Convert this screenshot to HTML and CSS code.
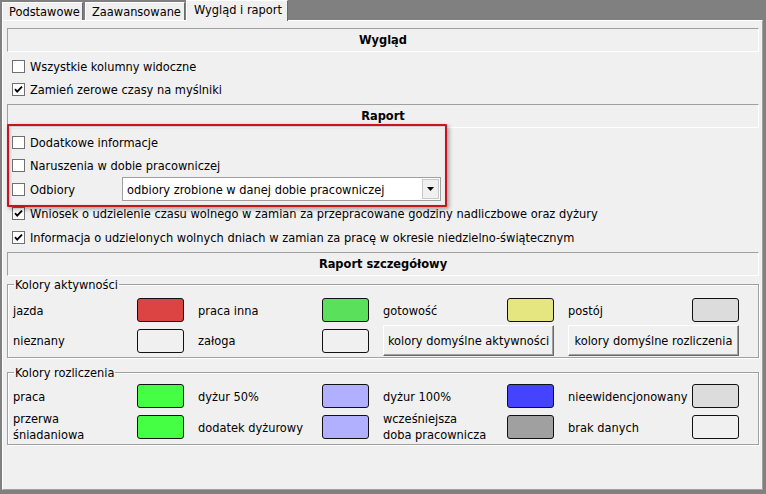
FILE: index.html
```html
<!DOCTYPE html>
<html lang="pl">
<head>
<meta charset="utf-8">
<title>Wygląd i raport</title>
<link rel="stylesheet" href="styles.css">
</head>
<body>
<div class="tabs">
  <div class="tab t1">Podstawowe</div>
  <div class="tab t2">Zaawansowane</div>
  <div class="tab active">Wygląd i raport</div>
</div>
<div class="panel">
  <div class="section-head">Wygląd</div>
  <div class="check-row first"><span class="cb"></span><span>Wszystkie kolumny widoczne</span></div>
  <div class="check-row tight"><span class="cb"><svg width="11" height="11" viewBox="0 0 11 11"><path d="M2 5.2 L4.2 7.6 L9 2.6" fill="none" stroke="#000" stroke-width="1.8"/></svg></span><span>Zamień zerowe czasy na myślniki</span></div>

  <div class="section-head spaced">Raport</div>
  <div class="check-row first"><span class="cb"></span><span>Dodatkowe informacje</span></div>
  <div class="check-row tight"><span class="cb"></span><span>Naruszenia w dobie pracowniczej</span></div>
  <div class="check-row"><span class="cb"></span><span class="odb-label">Odbiory</span>
    <div class="select"><span class="select-text">odbiory zrobione w danej dobie pracowniczej</span><span class="select-btn"><svg width="7" height="4" viewBox="0 0 7 4"><path d="M0 0 H7 L3.5 4 Z" fill="#000"/></svg></span></div>
  </div>
  <div class="check-row"><span class="cb"><svg width="11" height="11" viewBox="0 0 11 11"><path d="M2 5.2 L4.2 7.6 L9 2.6" fill="none" stroke="#000" stroke-width="1.8"/></svg></span><span>Wniosek o udzielenie czasu wolnego w zamian za przepracowane godziny nadliczbowe oraz dyżury</span></div>
  <div class="check-row"><span class="cb"><svg width="11" height="11" viewBox="0 0 11 11"><path d="M2 5.2 L4.2 7.6 L9 2.6" fill="none" stroke="#000" stroke-width="1.8"/></svg></span><span>Informacja o udzielonych wolnych dniach w zamian za pracę w okresie niedzielno-świątecznym</span></div>

  <div class="section-head spaced">Raport szczegółowy</div>

  <fieldset class="group g1">
    <legend>Kolory aktywności</legend>
    <div class="grid">
      <div class="cell"><span class="lbl">jazda</span><span class="sw c-red"></span></div>
      <div class="cell"><span class="lbl">praca inna</span><span class="sw c-green"></span></div>
      <div class="cell"><span class="lbl">gotowość</span><span class="sw c-yellow"></span></div>
      <div class="cell"><span class="lbl">postój</span><span class="sw c-lgray"></span></div>
      <div class="cell"><span class="lbl">nieznany</span><span class="sw c-bg"></span></div>
      <div class="cell"><span class="lbl">załoga</span><span class="sw c-bg"></span></div>
      <div class="cell"><button class="btn">kolory domyślne aktywności</button></div>
      <div class="cell"><button class="btn">kolory domyślne rozliczenia</button></div>
    </div>
  </fieldset>

  <fieldset class="group g2">
    <legend>Kolory rozliczenia</legend>
    <div class="grid">
      <div class="cell"><span class="lbl">praca</span><span class="sw c-lime"></span></div>
      <div class="cell"><span class="lbl">dyżur 50%</span><span class="sw c-lav"></span></div>
      <div class="cell"><span class="lbl">dyżur 100%</span><span class="sw c-blue"></span></div>
      <div class="cell"><span class="lbl">nieewidencjonowany</span><span class="sw c-lgray"></span></div>
      <div class="cell"><span class="lbl two">przerwa<br>śniadaniowa</span><span class="sw c-lime"></span></div>
      <div class="cell"><span class="lbl">dodatek dyżurowy</span><span class="sw c-lav"></span></div>
      <div class="cell"><span class="lbl two">wcześniejsza<br>doba pracownicza</span><span class="sw c-dgray"></span></div>
      <div class="cell"><span class="lbl">brak danych</span><span class="sw c-bg"></span></div>
    </div>
  </fieldset>
</div>
<div class="highlight"></div>
</body>
</html>
```
FILE: styles.css
```css
* { box-sizing: border-box; }
html, body { margin: 0; }
body {
  background: #808080;
  width: 766px;
  height: 494px;
  overflow: hidden;
  font: 12.7px/15px "DejaVu Sans Condensed", "DejaVu Sans", sans-serif;
  color: #000;
}
.tabs {
  display: flex;
  align-items: flex-end;
  height: 20px;
  padding-left: 2px;
}
.tab {
  height: 18px;
  background: #f0f0f0;
  border-top: 1px solid #fff;
  border-left: 1px solid #fff;
  border-right: 1px solid #696969;
  padding: 1px 0 0 6px;
  line-height: 16px;
  white-space: nowrap;
}
.t1 { width: 81px; margin-right: 2px; }
.t2 { width: 100px; margin-right: 1px; }
.tab.active {
  width: 102px;
  height: 21px;
  margin-bottom: -1px;
  position: relative;
  z-index: 1;
  padding: 1px 0 0 7px;
}
.panel {
  margin-left: 2px;
  width: 761px;
  height: 470px;
  background: #f0f0f0;
  border-top: 1px solid #fff;
  border-left: 1px solid #fff;
  border-right: 1px solid #a0a0a0;
  border-bottom: 1px solid #a0a0a0;
  padding: 7px 3px 0 4px;
}
.section-head {
  height: 24px;
  border-top: 1px solid #a0a0a0;
  border-left: 1px solid #a0a0a0;
  border-right: 1px solid #fff;
  border-bottom: 1px solid #fff;
  text-align: center;
  font-weight: bold;
  line-height: 22px;
}
.section-head.spaced { margin-top: 3px; }
.check-row {
  display: flex;
  align-items: center;
  height: 24px;
  padding-left: 5px;
  white-space: nowrap;
}
.check-row.first { margin-top: 2px; }
.check-row.tight { height: 23px; }
.cb {
  width: 13px;
  height: 13px;
  flex: 0 0 13px;
  border: 1px solid #707070;
  background: #fff;
  margin-right: 5px;
  display: flex;
}
.odb-label { width: 92px; }
.select {
  width: 319px;
  height: 24px;
  background: #fff;
  border: 1px solid #a0a0a0;
  display: flex;
  align-items: center;
  padding: 1px 1px 1px 4px;
}
.select-text { flex: 1; }
.select-btn {
  width: 17px;
  height: 20px;
  background: #f0f0f0;
  border: 1px solid #c8c8c8;
  display: flex;
  align-items: center;
  justify-content: center;
}
.group {
  margin: 1px 0 0 0;
  padding: 6px 0 1px 5px;
  border: 1px solid #a0a0a0;
  box-shadow: inset 1px 1px 0 #fff, 1px 1px 0 #fff;
  min-width: 0;
  width: 752px;
}
.group.g2 { margin-top: 7px; padding-top: 4px; }
.group legend {
  padding: 0 1px;
  margin-left: 1px;
  line-height: 15px;
}
.grid {
  display: grid;
  grid-template-columns: repeat(4, 171px);
  column-gap: 14px;
  row-gap: 3px;
  grid-template-rows: 24px 31px;
}
.g2 .grid { grid-template-rows: 24px 32px; }
.cell {
  display: flex;
  align-items: center;
}
.lbl {
  flex: 0 0 124px;
  white-space: nowrap;
  overflow: visible;
}
.lbl.two { line-height: 16px; }
.sw {
  width: 47px;
  height: 24px;
  flex: 0 0 47px;
  border: 1px solid #111;
  border-radius: 3px;
}
.c-red { background: #dc4444; }
.c-green { background: #5ae05a; }
.c-yellow { background: #e6e680; }
.c-lgray { background: #dcdcdc; }
.c-bg { background: #f0f0f0; }
.c-lime { background: #44ff44; }
.c-lav { background: #b0b0ff; }
.c-blue { background: #4444ff; }
.c-dgray { background: #a0a0a0; }
.btn {
  width: 172px;
  height: 31px;
  font: inherit;
  color: #000;
  background: #f0f0f0;
  border: 1px solid;
  border-color: #fff #696969 #696969 #fff;
  box-shadow: inset -1px -1px 0 #a0a0a0;
  padding: 0;
}
.highlight {
  position: absolute;
  left: 7px;
  top: 124px;
  width: 440px;
  height: 83px;
  border: 2px solid #c4161c;
  border-radius: 1px;
  box-shadow: 2px 2px 4px rgba(0,0,0,0.35), inset 1px 1px 3px rgba(0,0,0,0.2);
  pointer-events: none;
}
```
